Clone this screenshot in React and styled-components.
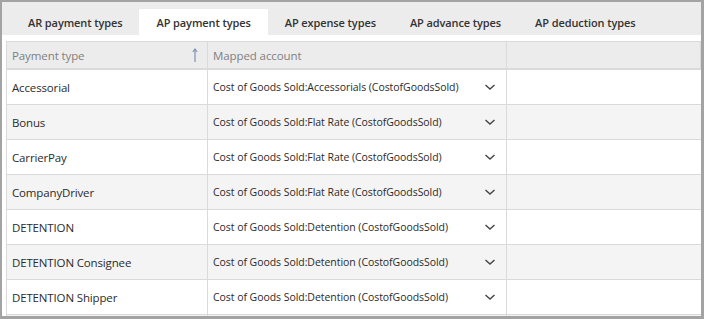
import React from "react";
import styled, { createGlobalStyle } from "styled-components";

const Global = createGlobalStyle`
  html, body { margin: 0; padding: 0; background: #fff; }
  body { font-family: "Open Sans", "Noto Sans", Arial, sans-serif; }
`;

const Frame = styled.div`
  width: 704px;
  height: 319px;
  box-sizing: border-box;
  border-style: solid;
  border-color: #a3a3a3;
  border-width: 2px 3px 3px 2px;
  background: #fff;
  overflow: hidden;
  display: flex;
  flex-direction: column;
`;

const TabBar = styled.div`
  height: 33px;
  flex: none;
  background: #ececec;
  display: flex;
  align-items: flex-end;
  padding-left: 9px;
`;

const Tab = styled.div`
  height: 26px;
  box-sizing: border-box;
  padding: 0 17px;
  display: flex;
  align-items: center;
  font-size: 11px;
  font-weight: 600;
  color: #333;
  letter-spacing: -0.1px;
  background: ${(p) => (p.$active ? "#fff" : "transparent")};
  white-space: nowrap;
`;

const TableWrap = styled.div`
  flex: 1;
  padding: 6px 0 0 4px;
  overflow: hidden;
`;

const Table = styled.div`
  border-top: 1px solid #dadada;
  border-left: 1px solid #dadada;
  display: grid;
  grid-template-columns: 201px 299px 1fr;
`;

const HeadCell = styled.div`
  height: 28px;
  box-sizing: border-box;
  background: #ececec;
  border-right: 1px solid #dadada;
  border-bottom: 2px solid #dadada;
  display: flex;
  align-items: center;
  justify-content: space-between;
  padding: 0 6px 0 5px;
  font-size: 11.5px;
  letter-spacing: -0.1px;
  color: #808080;
  &:last-child { border-right: none; }
`;

const Cell = styled.div`
  height: 35px;
  box-sizing: border-box;
  background: ${(p) => (p.$alt ? "#f4f4f4" : "#fff")};
  border-right: 1px solid #dadada;
  border-bottom: 1px solid #dadada;
  display: flex;
  align-items: center;
  justify-content: space-between;
  padding: 0 10px 0 5px;
  font-size: ${(p) => (p.$small ? "10.5px" : "11.5px")};
  letter-spacing: ${(p) => (p.$small ? "-0.05px" : "-0.15px")};
  color: #2b2b2b;
  white-space: nowrap;
  &:nth-child(3n) { border-right: none; }
`;

const Chevron = () => (
  <svg width="12" height="8" viewBox="0 0 12 8" style={{ flex: "none" }}>
    <path d="M1.5 2 L6 6 L10.5 2" fill="none" stroke="#444" strokeWidth="1.4" />
  </svg>
);

const SortArrow = () => (
  <svg width="6" height="15" viewBox="0 0 6 15" style={{ marginRight: 3 }}>
    <path d="M3 1 V14" stroke="#7b93b3" strokeWidth="1.2" />
    <path d="M0.8 4 L3 1 L5.2 4" fill="none" stroke="#7b93b3" strokeWidth="1.1" />
  </svg>
);

const tabs = [
  "AR payment types",
  "AP payment types",
  "AP expense types",
  "AP advance types",
  "AP deduction types",
];

const rows = [
  ["Accessorial", "Cost of Goods Sold:Accessorials (CostofGoodsSold)"],
  ["Bonus", "Cost of Goods Sold:Flat Rate (CostofGoodsSold)"],
  ["CarrierPay", "Cost of Goods Sold:Flat Rate (CostofGoodsSold)"],
  ["CompanyDriver", "Cost of Goods Sold:Flat Rate (CostofGoodsSold)"],
  ["DETENTION", "Cost of Goods Sold:Detention (CostofGoodsSold)"],
  ["DETENTION Consignee", "Cost of Goods Sold:Detention (CostofGoodsSold)"],
  ["DETENTION Shipper", "Cost of Goods Sold:Detention (CostofGoodsSold)"],
  ["", ""],
];

export default function App() {
  return (
    <>
      <Global />
      <Frame>
        <TabBar>
          {tabs.map((t, i) => (
            <Tab key={t} $active={i === 1}>
              {t}
            </Tab>
          ))}
        </TabBar>
        <TableWrap>
          <Table>
            <HeadCell>
              <span>Payment type</span>
              <SortArrow />
            </HeadCell>
            <HeadCell>Mapped account</HeadCell>
            <HeadCell />
            {rows.map(([name, acct], i) => (
              <React.Fragment key={i}>
                <Cell $alt={i % 2 === 1}>{name}</Cell>
                <Cell $alt={i % 2 === 1} $small>
                  <span>{acct}</span>
                  {acct && <Chevron />}
                </Cell>
                <Cell $alt={i % 2 === 1} />
              </React.Fragment>
            ))}
          </Table>
        </TableWrap>
      </Frame>
    </>
  );
}
